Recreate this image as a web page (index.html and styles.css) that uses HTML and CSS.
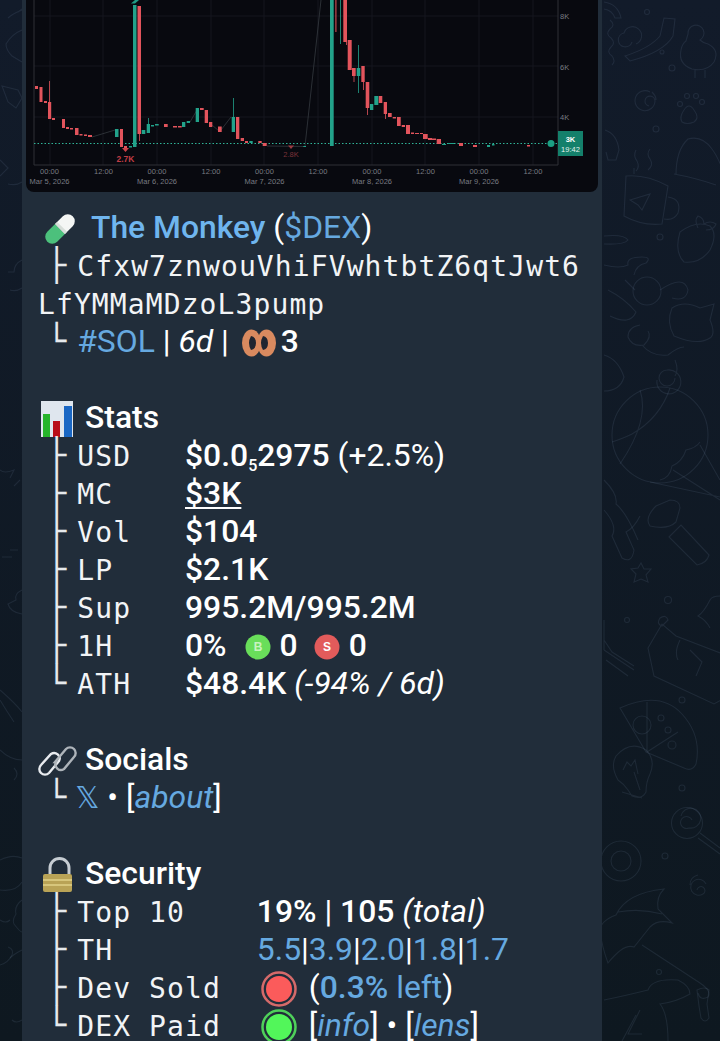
FILE: index.html
```html
<!DOCTYPE html>
<html lang="en">
<head>
    <meta charset="UTF-8">
    <title>The Monkey</title>
    <link rel="stylesheet" href="styles.css">
</head>
<body>
    <!-- wallpaper doodles -->
    <svg class="wallpaper" width="720" height="1041" viewBox="0 0 720 1041">
        <g>
            <path d="M604 2 Q618 4 621 18 L615 18 Q612 10 604 9"/>
            <path d="M610 20 q6 5 0 9 q-5 5 1 9 q5 5 0 9 q-5 5 1 9 q4 5 0 9"/>
            <path d="M625 56 Q650 48 660 36 L664 18 L675 19 L673 36 Q664 52 630 61 Z"/>
            <path d="M632 42 a7 7 0 1 1 -8 -9 a9 9 0 1 1 12 11"/>
            <circle cx="647" cy="12" r="2.5"/><circle cx="672" cy="68" r="3"/><circle cx="662" cy="52" r="2"/>
            <path d="M688 34 a8 8 0 1 1 12 6 q3 3 8 4 q12 6 6 18 q-7 10 -22 7 q-14 -5 -11 -19 q1 -6 5 -9 Z M695 70 v8 M705 70 v8"/>
            <path d="M650 92 a10 10 0 1 0 5 9 a5 5 0 1 0 -6 5 M652 92 q4 4 4 8"/>
            <path d="M684 110 q5 -8 10 0 q6 8 0 12 q-7 3 -12 0 q-3 -5 2 -12 Z"/>
            <circle cx="680" cy="104" r="2.5"/><circle cx="687" cy="96" r="2.5"/><circle cx="696" cy="96" r="2.5"/><circle cx="702" cy="102" r="2.5"/>
            <circle cx="656" cy="129" r="3"/>
            <path d="M605 130 q12 4 14 20 l-3 10 h-8 l-2 -8"/>
            <path d="M676 175 q0 -25 12 -36 q14 -4 24 10 q6 8 12 24 M674 174 q22 4 42 11"/>
            <path d="M636 150 q-3 6 1 11 q3 6 -1 10 M650 149 q-4 5 0 10 q4 6 -2 11 M634 168 v6"/>
            <path d="M626 176 q20 -2 42 10 l-6 38 q-20 2 -38 -8 Z M668 197 q14 2 10 16 q-4 8 -14 6"/>
            <path d="M630 200 l20 -6 l-8 16 l-4 -5 Z"/>
            <path d="M680 232 q16 -12 30 -6 q8 8 0 24 q-10 14 -26 12 q-10 -10 -4 -30 Z M698 228 q-4 -8 0 -12 q6 2 6 8 q6 -4 12 0 q-2 6 -10 6"/>
            <circle cx="660" cy="237" r="3"/>
            <path d="M604 236 q20 -2 24 4 q-4 5 -24 4"/>
            <path d="M604 265 q16 4 24 0 q-2 -8 14 -8 q10 0 4 6 q-10 2 -12 12"/>
            <circle cx="647" cy="291" r="14"/>
            <path d="M608 290 q16 8 28 22 q-6 14 -26 4 M625 280 l10 10 M660 290 q24 -16 28 0 q-2 12 -16 8"/>
            <path d="M672 308 q12 -8 28 0 l14 -4 l-4 16 q6 14 0 18 q-12 8 -36 -2 q-8 -14 -2 -28 Z"/>
            <path d="M642 345 q10 12 26 10 q10 -8 16 -8 M640 325 q-12 2 -12 12 q4 10 16 8 q8 -8 4 -14"/>
            <path d="M604 355 q14 4 20 22 q-4 14 -20 14"/>
            <path d="M675 378 a8 8 0 1 1 -8 -8 a12 12 0 1 1 -10 10 M675 360 q4 10 0 16"/>
            <circle cx="660" cy="435" r="48"/>
            <path d="M670 388 q-10 30 -38 46 q-8 4 -20 8 M640 390 q10 30 -20 74"/>
            <path d="M700 445 L720 480 M650 482 L720 497 M673 470 L720 500 M660 480 q10 -2 12 -14 q10 -4 14 -16 q10 -2 14 -8"/>
            <path d="M604 480 q14 14 12 24 q10 8 22 36"/>
        </g>
        <g>
            <path d="M650 526 q-6 -8 6 -20 l14 -6 q10 0 10 8 l-4 14 q-8 8 -26 4 Z M669 537 l12 -12 l28 30 q-2 8 -12 10 Z"/>
            <path d="M604 510 q14 16 8 26 l10 22 q10 6 12 -8 l-8 -18 q8 -4 14 -16"/>
            <path d="M641 563 l3 6 l7 0 l-5 6 l2 7 l-7 -3 l-7 3 l2 -8 l-5 -5 l7 -1 Z"/>
            <circle cx="668" cy="600" r="3.5"/><circle cx="627" cy="620" r="2.5"/>
            <path d="M648 648 l14 -24 l14 12 l52 20 v40 l-14 8 l-60 -28 Z M660 618 q6 -4 8 2 l-6 6 q-6 -2 -2 -8 Z M680 640 q-6 12 -2 20 M690 650 l12 12 l-6 14"/>
            <path d="M710 600 q-6 12 -12 16 q8 4 12 12 M720 596 q-8 0 -10 4"/>
            <path d="M604 640 l8 12 l22 14 M604 650 l30 20 M606 660 l22 16 M604 620 v30"/>
            <path d="M620 708 q40 -18 62 6 q20 22 14 50 q-4 8 -12 4 L646 752 Z M647 702 v50 M647 752 L678 732"/>
            <circle cx="642" cy="725" r="9"/><circle cx="661" cy="718" r="3"/><circle cx="672" cy="745" r="4"/><circle cx="668" cy="730" r="3"/>
            <circle cx="682" cy="700" r="3"/>
            <path d="M628 790 q-4 -6 -10 -10 q-8 -14 -2 -24 q14 -16 30 -6 q10 10 4 24 q-4 8 -4 18 q-4 8 -14 4 Z M622 792 l20 6"/>
            <path d="M623 770 l4 -8 l4 4 l4 -6 l3 14 M640 790 l-6 -18"/>
            <circle cx="682" cy="788" r="3"/>
            <circle cx="687" cy="823" r="15.5"/>
            <path d="M700 833 L720 848 M698 838 L720 854 M692 820 a6 6 0 1 0 -3 8 a10 10 0 1 0 -8 -12"/>
            <circle cx="621" cy="861" r="20"/><circle cx="621" cy="861" r="10"/>
            <circle cx="665" cy="856" r="3"/>
            <path d="M706 884 a8 8 0 1 0 -3 10 a4 4 0 1 0 -6 -4 M698 875 q-8 2 -8 10"/>
            <path d="M616 915 q10 -22 48 -26 q-8 8 -6 20 l14 14 q-14 -4 -22 4 l-16 20 q-10 -4 -26 16 q-6 -16 -8 -32 q0 -10 16 -16 Z M618 912 q22 -4 44 2 M642 945 l58 38 q12 8 8 14 q-8 4 -10 -4"/>
            <circle cx="659" cy="972" r="2.5"/>
            <path d="M697 990 q8 -4 12 0 l-2 14 l2 14 q-4 6 -8 0 l-2 -12 Z"/>
            <path d="M604 1000 q20 -4 44 -10 q4 -12 30 -10 q12 6 12 14 q-14 8 -30 10 q8 10 8 37 M640 1010 l-12 24 h14 M622 1041 l14 -26"/>
        </g>
        <g>
            <path d="M18 12 l4 -3 M8 18 q4 -4 14 -8"/>
            <path d="M22 30 q-10 4 -16 14 q0 6 6 12 l10 6"/>
            <path d="M2 86 l16 4 l4 8 l-6 10 l-8 -6 Z"/>
            <path d="M0 160 l8 8 l-8 8 M8 184 q8 2 14 -2"/>
            <path d="M22 260 q-8 4 -8 12 h-6 M10 290 q6 2 12 -2"/>
            <path d="M0 470 q4 4 14 0 l-4 8 M20 480 l-6 6 M10 550 l8 0 M2 557 h10"/>
            <path d="M22 590 q-8 4 -6 10 l-8 4 q2 8 14 10"/>
            <path d="M0 690 q16 14 22 22 M0 700 q6 10 14 22 M0 750 q10 10 22 10 M14 780 q6 -6 0 -12"/>
            <path d="M0 860 q12 -6 22 -2 M0 890 q16 2 22 -8"/>
            <path d="M22 900 q-8 6 -6 14 q-4 6 -2 10 q6 8 8 8 M0 965 q8 -2 12 -10 q2 -6 -4 -8"/>
            <path d="M0 920 q6 4 10 0 M22 950 q-8 4 -12 8 M12 1020 q4 4 10 0"/>
        </g>
    </svg>

    <div class="bubble">
        <svg class="chart" width="572" height="192" viewBox="26 0 572 192">
            <g class="grid">
                <path d="M34 16H558M34 66H558M34 117H558"/>
                <path d="M50 0V165M103 0V165M157 0V165M211 0V165M264 0V165M318 0V165M372 0V165M425 0V165M479 0V165M533 0V165"/>
            </g>
            <path class="axis" d="M34 0V165H558V0"/>
            <path class="level" d="M34 143.5H558"/>
            <path class="thin" d="M92 137L115 130M190 122L197 110M212 125L219 131M221 130L231 117M267 146L304 146.5M305 146L321 0"/>

            <g class="down">
                <rect x="35" y="86" width="3" height="3"/>
                <rect x="39.5" y="87" width="3" height="15"/>
                <rect x="44" y="101" width="3" height="2"/>
                <rect x="49.2" y="81" width="0.8" height="38"/>
                <rect x="48" y="102" width="3.2" height="17"/>
                <rect x="52" y="118" width="3" height="2"/>
                <rect x="62" y="119" width="3" height="9"/>
                <rect x="66" y="127" width="3" height="2"/>
                <rect x="70" y="128" width="3" height="1.5"/>
                <rect x="75" y="128" width="3.5" height="7"/>
                <rect x="79.5" y="134" width="3" height="1.5"/>
                <rect x="84" y="134.5" width="3" height="1.5"/>
                <rect x="88" y="135" width="4" height="2"/>
                <rect x="120" y="129" width="3" height="18"/>
                <rect x="124" y="146" width="3" height="2"/>
                <rect x="137.5" y="6" width="3.5" height="128"/>
                <rect x="139" y="130" width="0.8" height="11"/>
                <rect x="164" y="124" width="3.7" height="3"/>
                <rect x="173" y="126" width="4" height="1.5"/>
                <rect x="178" y="126" width="3.7" height="1.5"/>
                <rect x="200" y="108" width="3.7" height="2"/>
                <rect x="204.7" y="110" width="3.3" height="13"/>
                <rect x="209" y="122" width="3.3" height="5"/>
                <rect x="218" y="126.5" width="3.7" height="5.5"/>
                <rect x="236" y="117" width="3.3" height="22"/>
                <rect x="240.7" y="138" width="3.3" height="3"/>
                <rect x="245" y="141" width="3" height="2"/>
                <rect x="258.3" y="141" width="3.4" height="2"/>
                <rect x="262.7" y="143" width="4" height="3"/>
                <rect x="335" y="0" width="1.7" height="32" opacity="0.6"/>
                <rect x="343.3" y="0" width="3.7" height="42"/>
                <rect x="346" y="40" width="0.8" height="5"/>
                <rect x="347.7" y="40" width="4" height="30"/>
                <rect x="352" y="68" width="3.7" height="8"/>
                <rect x="353.6" y="76" width="0.8" height="6"/>
                <rect x="361.3" y="66" width="3.4" height="16"/>
                <rect x="363" y="82" width="0.8" height="8"/>
                <rect x="365.7" y="82" width="3.6" height="26"/>
                <rect x="367.2" y="108" width="0.8" height="7"/>
                <rect x="378.7" y="96" width="3.6" height="7"/>
                <rect x="383.7" y="102" width="3.3" height="12"/>
                <rect x="385" y="114" width="0.8" height="5"/>
                <rect x="388" y="113" width="3.7" height="4"/>
                <rect x="392.7" y="117" width="3.3" height="1.5"/>
                <rect x="397" y="117" width="3.7" height="9"/>
                <rect x="401.7" y="125" width="3.3" height="2"/>
                <rect x="406" y="125" width="4" height="9"/>
                <rect x="411" y="132.5" width="3" height="1.5"/>
                <rect x="415" y="133" width="4" height="1"/>
                <rect x="420" y="133" width="3" height="1"/>
                <rect x="423" y="134" width="4.7" height="5"/>
                <rect x="428" y="138" width="4" height="2"/>
                <rect x="432" y="138.5" width="4" height="1.5"/>
                <rect x="436.7" y="139" width="4.3" height="5"/>
                <rect x="459" y="143" width="4" height="3"/>
                <rect x="473" y="145" width="4" height="2"/>
                <rect x="527" y="145" width="3" height="1.5"/>
            </g>

            <g class="up">
                <rect x="115" y="129" width="3.5" height="8"/>
                <rect x="129" y="146" width="3" height="1.5"/>
                <rect x="133" y="5" width="3.5" height="142"/>
                <rect x="141.7" y="130" width="3.6" height="4"/>
                <rect x="148" y="118" width="0.8" height="15"/>
                <rect x="146.7" y="124" width="3.3" height="9"/>
                <rect x="151" y="125" width="3" height="1.5"/>
                <rect x="155" y="124" width="3.7" height="1.5"/>
                <rect x="182" y="122" width="3.3" height="5"/>
                <rect x="186.7" y="121" width="3.3" height="2"/>
                <rect x="195.7" y="108" width="3.3" height="14"/>
                <rect x="233" y="98" width="0.8" height="19"/>
                <rect x="231.7" y="117" width="3.3" height="15"/>
                <rect x="249.3" y="141" width="3.4" height="2"/>
                <rect x="303.3" y="146" width="2.7" height="1"/>
                <rect x="330" y="0" width="3.7" height="146"/>
                <rect x="340.2" y="0" width="0.8" height="44"/>
                <rect x="358.2" y="45" width="0.8" height="48"/>
                <rect x="356.7" y="68" width="3.6" height="8"/>
                <rect x="370" y="104" width="3.3" height="6"/>
                <rect x="374.3" y="96" width="4" height="9"/>
                <rect x="442" y="144" width="4" height="1"/>
                <rect x="448" y="143" width="6" height="1"/>
                <rect x="487" y="145" width="3" height="2"/>
                <rect x="492" y="144" width="2.5" height="1.5"/>
            </g>

            <path class="marker-up" d="M135 3.5L139 0H135L131 3.5Z"/>
            <path class="marker-down" d="M122 148H129L125.5 152Z"/>
            <path class="marker-dim" d="M288 145.5H294L291 149Z"/>
            <text class="low" x="125.5" y="162">2.7K</text>
            <text class="low dim" x="291" y="157">2.8K</text>

            <g class="axis-labels">
                <text x="49.5" y="174">00:00</text><text x="49.5" y="184">Mar 5, 2026</text>
                <text x="103.5" y="174">12:00</text>
                <text x="157" y="174">00:00</text><text x="157" y="184">Mar 6, 2026</text>
                <text x="211" y="174">12:00</text>
                <text x="264.5" y="174">00:00</text><text x="264.5" y="184">Mar 7, 2026</text>
                <text x="318" y="174">12:00</text>
                <text x="372" y="174">00:00</text><text x="372" y="184">Mar 8, 2026</text>
                <text x="425.5" y="174">12:00</text>
                <text x="479" y="174">00:00</text><text x="479" y="184">Mar 9, 2026</text>
                <text x="533" y="174">12:00</text>
            </g>
            <g class="price-labels">
                <text x="560" y="19">8K</text>
                <text x="560" y="70">6K</text>
                <text x="560" y="120">4K</text>
            </g>
            <circle class="last-dot" cx="551" cy="143.5" r="3.5"/>
            <rect class="tag" x="558" y="131" width="25" height="25"/>
            <text class="tag-price" x="570.5" y="141.5">3K</text>
            <text class="tag-time" x="570.5" y="151.5">19:42</text>
        </svg>

        <div class="message">
            <div class="line"><svg class="emoji pill" width="46" height="36" viewBox="0 0 46 36"><g transform="rotate(-45 22 18)"><path d="M22 11H11a7 7 0 0 0 0 14H22Z" fill="#4cc07c"/><path d="M22 11H33a7 7 0 0 1 0 14H22Z" fill="#f4f6f4"/><path d="M22 11h3v14h-3Z" fill="#d7ded9"/></g></svg><a class="title">The Monkey</a> (<a>$DEX</a>)</div>
            <div class="line wrap"><span class="tree">├</span><code>Cfxw7znwouVhiFVwhtbtZ6qtJwt6LfYMMaMDzoL3pump</code></div>
            <div class="line"><span class="tree">└</span><a>#SOL</a> | <i>6d</i> | <svg class="emoji eyes" width="34" height="30" viewBox="0 0 34 30"><ellipse cx="9.500" cy="15" rx="9.500" ry="13.500" fill="#d98a5f"/><ellipse cx="24.500" cy="15" rx="9.500" ry="13.500" fill="#d98a5f"/><path d="M9 8q-4 7 0 14q5 -1 5 -7q0 -6 -5 -7ZM21 8q-4 7 0 14q5 -1 5 -7q0 -6 -5 -7Z" fill="#1f2530"/></svg><b>3</b></div>
            <div class="line">&nbsp;</div>

            <div class="line heading"><svg class="emoji" width="40" height="38" viewBox="0 0 40 38"><rect x="3" y="1" width="32" height="36" fill="#dfe6ee"/><rect x="5" y="14" width="7" height="23" fill="#26b52b"/><rect x="15" y="21" width="7" height="16" fill="#b90d18"/><rect x="26" y="6" width="8" height="31" fill="#1a67c4"/></svg><b>Stats</b></div>
            <div class="line"><span class="tree">├</span><code>USD   </code><b>$0.0<sub>5</sub>2975</b> (+2.5%)</div>
            <div class="line"><span class="tree">├</span><code>MC    </code><b class="under">$3K</b></div>
            <div class="line"><span class="tree">├</span><code>Vol   </code><b>$104</b></div>
            <div class="line"><span class="tree">├</span><code>LP    </code><b>$2.1K</b></div>
            <div class="line"><span class="tree">├</span><code>Sup   </code><b>995.2M/995.2M</b></div>
            <div class="line"><span class="tree">├</span><code>1H    </code><b>0%</b><svg class="emoji badge" width="26" height="26" viewBox="0 0 26 26"><circle cx="13" cy="13" r="12.500" fill="#69de5a"/><text x="13" y="17" class="badge-text green">B</text></svg><b>0</b><svg class="emoji badge sell" width="26" height="26" viewBox="0 0 26 26"><circle cx="13" cy="13" r="12.500" fill="#e25b5b"/><text x="13" y="17" class="badge-text">S</text></svg><b>0</b></div>
            <div class="line"><span class="tree">└</span><code>ATH   </code><b>$48.4K</b> <i>(-94% / 6d)</i></div>
            <div class="line">&nbsp;</div>

            <div class="line heading"><svg class="emoji" width="40" height="38" viewBox="0 0 40 38"><g fill="none" stroke-linecap="round"><path d="M21 19L11 31a5.500 5.500 0 0 1 -8 -8L13 12a5.500 5.500 0 0 1 8 7Z" stroke="#e8ebef" stroke-width="2.400"/><path d="M17 20L28 7a5.500 5.500 0 0 1 8 8L26 27a5.500 5.500 0 0 1 -8 -7Z" stroke="#aeb4ba" stroke-width="2.400"/></g></svg><b>Socials</b></div>
            <div class="line"><span class="tree">└</span><a class="x">𝕏</a> • [<a><i>about</i></a>]</div>
            <div class="line">&nbsp;</div>

            <div class="line heading"><svg class="emoji" width="40" height="38" viewBox="0 0 40 38"><path d="M12 18V12a9.500 9.500 0 0 1 19 0V18" fill="none" stroke="#c6ccd2" stroke-width="3"/><rect x="5" y="18" width="29" height="18" rx="2" fill="#b9a356"/><path d="M5 24H34M5 29H34" stroke="#d7c67c" stroke-width="2"/></svg><b>Security</b></div>
            <div class="line"><span class="tree">├</span><code>Top 10    </code><b>19%</b> | <b>105</b> <i>(total)</i></div>
            <div class="line"><span class="tree">├</span><code>TH        </code><a>5.5</a>|<a>3.9</a>|<a>2.0</a>|<a>1.8</a>|<a>1.7</a></div>
            <div class="line"><span class="tree">├</span><code>Dev Sold  </code><svg class="emoji dot" width="36" height="36" viewBox="0 0 36 36"><circle cx="18" cy="18" r="16.500" fill="none" stroke="#d56a6a" stroke-width="2.500"/><circle cx="18" cy="18" r="13" fill="#fb5b5b"/></svg>(<a><b>0.3%</b> left</a>)</div>
            <div class="line"><span class="tree">└</span><code>DEX Paid  </code><svg class="emoji dot" width="36" height="36" viewBox="0 0 36 36"><circle cx="18" cy="18" r="16.500" fill="none" stroke="#4fd05a" stroke-width="2.500"/><circle cx="18" cy="18" r="13" fill="#52f65a"/></svg>[<a><i>info</i></a>] • [<a><i>lens</i></a>]</div>
        </div>
    </div>
</body>
</html>
```

FILE: styles.css
```css
html, body {
    height: 100%;
}

body {
    margin: 0;
    height: 1041px;
    overflow: hidden;
    position: relative;
    background: linear-gradient(180deg, #121b2a, #0e1820);
    font-family: 'Roboto', sans-serif;
    color: #fff;
}

.wallpaper {
    position: absolute;
    top: 0;
    left: 0;
    fill: none;
    stroke: #8aa4c4;
    stroke-opacity: 0.12;
    stroke-width: 1.1;
}

.bubble {
    position: relative;
    width: 580px;
    height: 1041px;
    margin-left: 22px;
    background: #212d3a;
    overflow: hidden;
}

/* Chart */
.chart {
    display: block;
    margin-left: 4px;
    background: #08090f;
    border-radius: 0 0 8px 8px;
}

.grid path {
    fill: none;
    stroke: #14161e;
    stroke-width: 1;
}

.axis {
    fill: none;
    stroke: #2e3137;
    stroke-width: 1;
}

.level {
    fill: none;
    stroke: #2fb498;
    stroke-width: 1;
    stroke-dasharray: 1.5 2;
}

.thin {
    fill: none;
    stroke: #3b4146;
    stroke-width: 0.7;
}

.down {
    fill: #e2545c;
}

.up {
    fill: #22a28a;
}

.marker-up {
    fill: #1f9c85;
}

.marker-down {
    fill: #d0434b;
}

.marker-dim {
    fill: #9b3a42;
}

.chart text {
    font-family: 'Liberation Sans', sans-serif;
    text-anchor: middle;
}

.low {
    fill: #c13d45;
    font-size: 8.5px;
    font-weight: bold;
}

.low.dim {
    fill: #7c3239;
    font-size: 7.5px;
    font-weight: normal;
}

.axis-labels text,
.price-labels text {
    fill: #787b82;
    font-size: 7.5px;
}

.price-labels text {
    text-anchor: start;
}

.last-dot {
    fill: #1c9f83;
}

.tag {
    fill: #14806b;
}

.tag-price {
    fill: #fff;
    font-size: 7.5px;
    font-weight: bold;
}

.tag-time {
    fill: #e4f2ee;
    font-size: 7.5px;
}

/* Message text */
.message {
    padding: 16px 0 0 16px;
    width: 556px;
    font-size: 31.85px;
    line-height: 38px;
}

.line {
    white-space: pre;
}

.line.wrap {
    white-space: pre-wrap;
    word-break: break-all;
}

a {
    color: #66a9e0;
}

.title {
    color: #6fb5ee;
    font-weight: 500;
}

b {
    font-weight: 500;
}

.under {
    text-decoration: underline;
    text-underline-offset: 3px;
    text-decoration-thickness: 2px;
}

sub {
    font-size: 16px;
    line-height: 0;
    vertical-align: -5px;
}

code {
    font-family: 'DejaVu Sans Mono', monospace;
    font-size: 28px;
    letter-spacing: 1.1px;
    line-height: 1;
    color: #f2f4f6;
}

.tree {
    font-family: 'DejaVu Sans Mono', monospace;
    font-size: 32px;
    line-height: 1;
    margin-left: 9px;
    margin-right: 11px;
    color: #e6e9ec;
}

.x {
    font-family: 'DejaVu Sans', sans-serif;
    font-size: 30px;
    line-height: 1;
    margin-left: -2px;
}

/* Inline pictures that stand in for emoji */
.emoji {
    vertical-align: middle;
    margin-top: -6px;
    margin-bottom: -4px;
}

.pill {
    margin-right: 7px;
}

.eyes {
    margin-left: 5px;
    margin-right: 5px;
}

.heading .emoji {
    margin-right: 7px;
}

.badge {
    margin: -6px 9px -4px 18px;
}

.badge.sell {
    margin-left: 16px;
}

.dot {
    margin: -6px 12px -4px 4px;
}

.badge-text {
    fill: #fff;
    font-family: 'Liberation Sans', sans-serif;
    font-size: 12px;
    font-weight: bold;
    text-anchor: middle;
}

.badge-text.green {
    fill: #c9f3c0;
}
```
